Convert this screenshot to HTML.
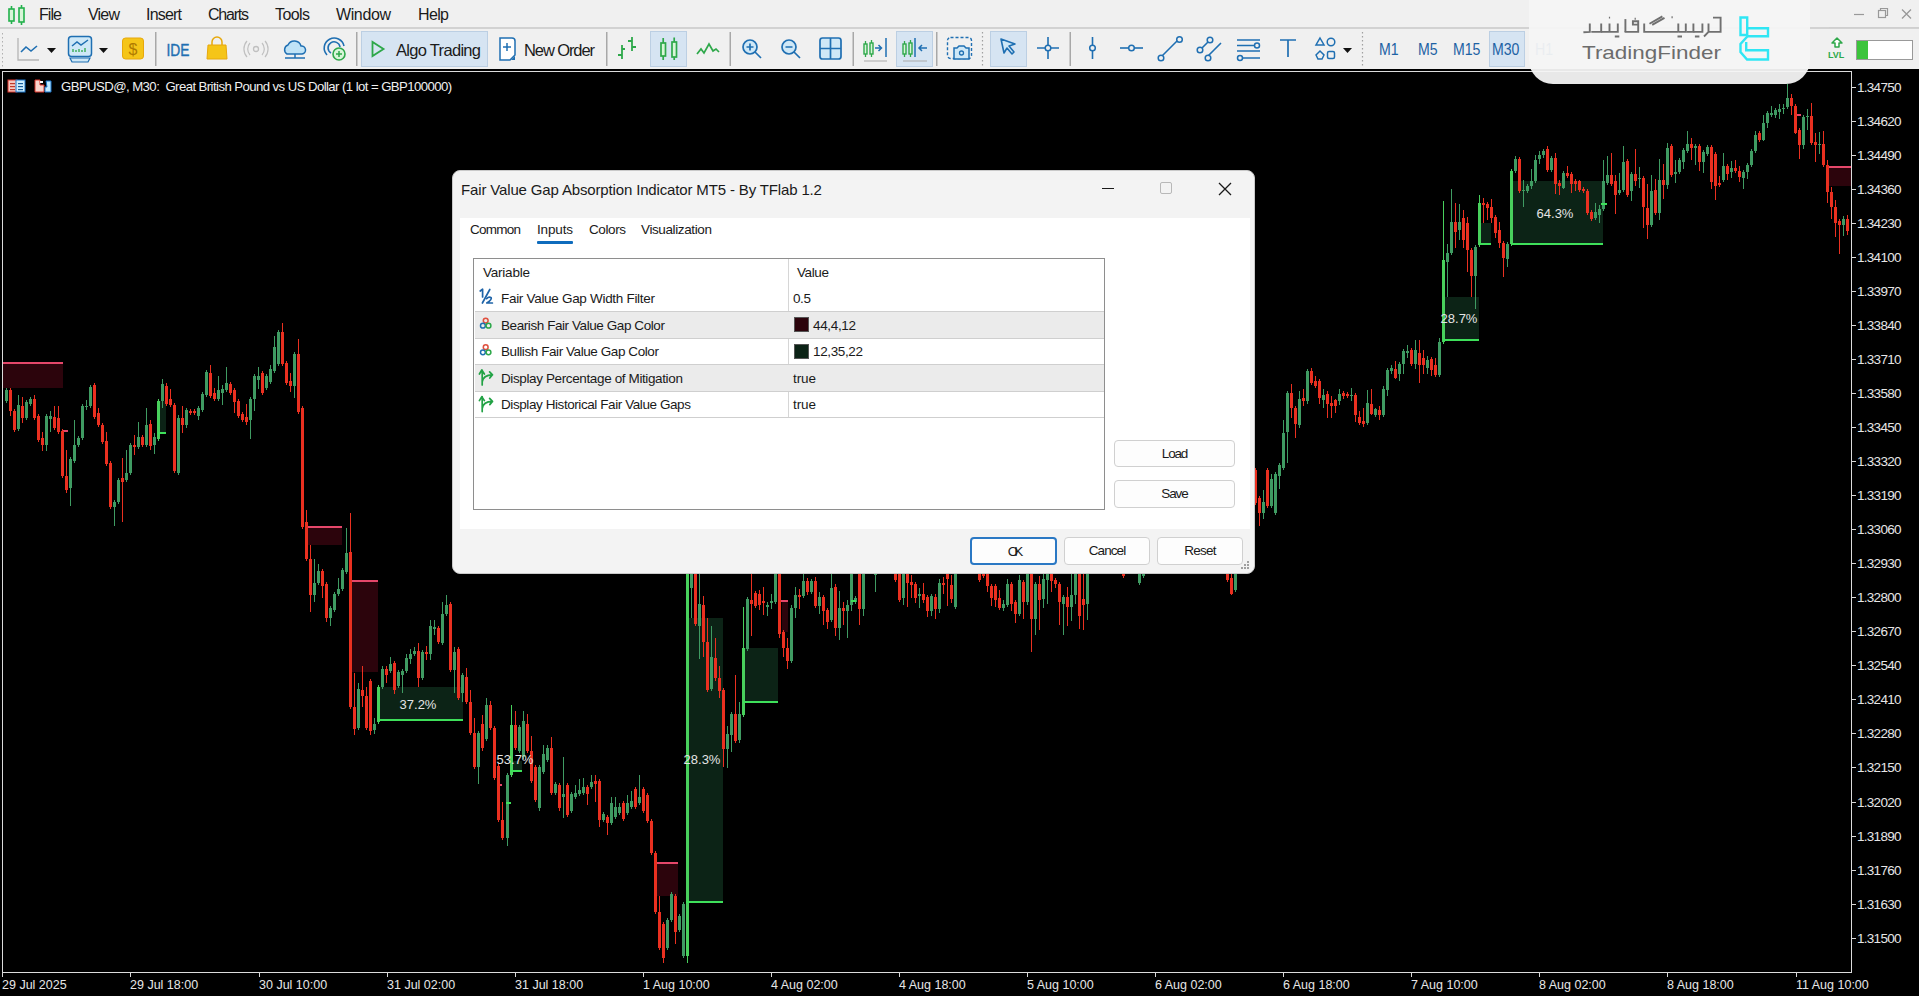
<!DOCTYPE html>
<html><head><meta charset="utf-8">
<style>
*{margin:0;padding:0;box-sizing:border-box}
html,body{width:1919px;height:996px;overflow:hidden;background:#000;font-family:"Liberation Sans",sans-serif}
.abs{position:absolute}
#menubar{position:absolute;left:0;top:0;width:1919px;height:29px;background:#f0f0f0;border-bottom:2px solid #d2d2d2}
.mi{position:absolute;top:6px;font-size:15.5px;color:#1b1b1b}
#toolbar{position:absolute;left:0;top:29px;width:1919px;height:40px;background:#f0f0f0}
.sep{position:absolute;top:33px;width:2px;height:32px;background:#9a9a9a}
.hl{position:absolute;top:31px;height:36px;background:#d5e3f1;border:1px solid #b8cbe0}
.tb{position:absolute;font-size:16px;color:#1b1b1b}
.tf{position:absolute;top:40px;font-size:16px;color:#1d62a4}
#chart{position:absolute;left:0;top:69px;width:1919px;height:927px;background:#000}
.pl{position:absolute;left:1857px;font-size:12.5px;color:#e6e6e6;letter-spacing:0.1px}
.ptk{position:absolute;left:1851px;width:5px;height:1px;background:#d8d8d8}
.tl{position:absolute;top:978px;font-size:12.5px;color:#e6e6e6}
.ttk{position:absolute;top:972px;width:1px;height:5px;background:#d8d8d8}
#dlg{position:absolute;left:452px;top:170px;width:803px;height:404px;background:#f3f3f3;border:1px solid #c9c9c9;border-radius:8px;overflow:hidden}
.dt{position:absolute;font-size:13.5px;color:#1a1a1a}
.btn{position:absolute;background:#fdfdfd;border:1px solid #d0d0d0;border-radius:4px;font-size:13.5px;color:#1a1a1a;text-align:center}
</style></head><body>
<div id="chart">
<svg class="abs" style="left:0;top:-69px" width="1919" height="996" viewBox="0 0 1919 996">
<rect x="158" y="401" width="8" height="32" fill="#0c2316"/><rect x="378" y="687" width="85" height="33" fill="#0c2316"/><rect x="510" y="761" width="12" height="10" fill="#0c2316"/><rect x="686" y="618" width="37" height="284" fill="#0c2316"/><rect x="743" y="648" width="35" height="54" fill="#0c2316"/><rect x="1443" y="297" width="36" height="43" fill="#0c2316"/><rect x="1479" y="223" width="12" height="21" fill="#0c2316"/><rect x="1511" y="181" width="92" height="63" fill="#0c2316"/>
<rect x="3" y="363" width="60" height="25" fill="#2c040c"/><rect x="3" y="362" width="60" height="2" fill="#e5476a"/><rect x="308" y="527" width="34" height="18" fill="#2c040c"/><rect x="308" y="526" width="34" height="2" fill="#e5476a"/><rect x="352" y="581" width="26" height="91" fill="#2c040c"/><rect x="352" y="580" width="26" height="2" fill="#e5476a"/><rect x="654" y="863" width="24" height="33" fill="#2c040c"/><rect x="654" y="862" width="24" height="2" fill="#e5476a"/><rect x="1829" y="167" width="22" height="19" fill="#2c040c"/><rect x="1829" y="166" width="22" height="2" fill="#e5476a"/><rect x="782" y="602" width="6" height="30" fill="#2c040c"/><rect x="62" y="430" width="6" height="2" fill="#e5476a"/><rect x="497" y="784" width="5" height="2" fill="#e5476a"/><rect x="780" y="600" width="8" height="2" fill="#e5476a"/><rect x="1796" y="114" width="5" height="2" fill="#e5476a"/>
<rect x="6" y="388" width="1" height="15" fill="#3f9b62"/><rect x="5" y="390" width="3" height="11" fill="#3f9b62"/><rect x="10" y="388" width="1" height="28" fill="#ea3020"/><rect x="9" y="390" width="3" height="21" fill="#ea3020"/><rect x="14" y="409" width="1" height="23" fill="#ea3020"/><rect x="13" y="411" width="3" height="19" fill="#ea3020"/><rect x="18" y="395" width="1" height="36" fill="#3f9b62"/><rect x="17" y="405" width="3" height="24" fill="#3f9b62"/><rect x="22" y="397" width="1" height="26" fill="#ea3020"/><rect x="21" y="406" width="3" height="12" fill="#ea3020"/><rect x="26" y="400" width="1" height="20" fill="#3f9b62"/><rect x="25" y="402" width="3" height="16" fill="#3f9b62"/><rect x="30" y="397" width="1" height="9" fill="#3f9b62"/><rect x="29" y="399" width="3" height="5" fill="#3f9b62"/><rect x="34" y="395" width="1" height="25" fill="#ea3020"/><rect x="33" y="399" width="3" height="19" fill="#ea3020"/><rect x="38" y="414" width="1" height="28" fill="#ea3020"/><rect x="37" y="416" width="3" height="24" fill="#ea3020"/><rect x="42" y="432" width="1" height="19" fill="#ea3020"/><rect x="41" y="438" width="3" height="7" fill="#ea3020"/><rect x="46" y="414" width="1" height="37" fill="#3f9b62"/><rect x="45" y="416" width="3" height="29" fill="#3f9b62"/><rect x="50" y="411" width="1" height="21" fill="#3f9b62"/><rect x="49" y="416" width="3" height="3" fill="#3f9b62"/><rect x="54" y="406" width="1" height="24" fill="#ea3020"/><rect x="53" y="417" width="3" height="11" fill="#ea3020"/><rect x="58" y="406" width="1" height="28" fill="#ea3020"/><rect x="57" y="418" width="3" height="14" fill="#ea3020"/><rect x="62" y="429" width="1" height="49" fill="#ea3020"/><rect x="61" y="431" width="3" height="45" fill="#ea3020"/><rect x="66" y="450" width="1" height="43" fill="#ea3020"/><rect x="65" y="476" width="3" height="14" fill="#ea3020"/><rect x="70" y="457" width="1" height="49" fill="#3f9b62"/><rect x="69" y="459" width="3" height="29" fill="#3f9b62"/><rect x="74" y="420" width="1" height="43" fill="#3f9b62"/><rect x="73" y="445" width="3" height="16" fill="#3f9b62"/><rect x="78" y="436" width="1" height="11" fill="#3f9b62"/><rect x="77" y="438" width="3" height="7" fill="#3f9b62"/><rect x="82" y="404" width="1" height="36" fill="#3f9b62"/><rect x="81" y="406" width="3" height="32" fill="#3f9b62"/><rect x="86" y="400" width="1" height="10" fill="#3f9b62"/><rect x="85" y="406" width="3" height="1" fill="#3f9b62"/><rect x="90" y="385" width="1" height="23" fill="#3f9b62"/><rect x="89" y="387" width="3" height="19" fill="#3f9b62"/><rect x="94" y="383" width="1" height="36" fill="#ea3020"/><rect x="93" y="385" width="3" height="32" fill="#ea3020"/><rect x="98" y="408" width="1" height="19" fill="#ea3020"/><rect x="97" y="413" width="3" height="12" fill="#ea3020"/><rect x="102" y="423" width="1" height="21" fill="#ea3020"/><rect x="101" y="425" width="3" height="17" fill="#ea3020"/><rect x="106" y="432" width="1" height="34" fill="#ea3020"/><rect x="105" y="441" width="3" height="23" fill="#ea3020"/><rect x="110" y="461" width="1" height="48" fill="#ea3020"/><rect x="109" y="463" width="3" height="44" fill="#ea3020"/><rect x="114" y="500" width="1" height="26" fill="#3f9b62"/><rect x="113" y="502" width="3" height="5" fill="#3f9b62"/><rect x="118" y="478" width="1" height="26" fill="#3f9b62"/><rect x="117" y="480" width="3" height="22" fill="#3f9b62"/><rect x="122" y="458" width="1" height="64" fill="#ea3020"/><rect x="121" y="478" width="3" height="4" fill="#ea3020"/><rect x="126" y="450" width="1" height="32" fill="#3f9b62"/><rect x="125" y="473" width="3" height="7" fill="#3f9b62"/><rect x="130" y="443" width="1" height="32" fill="#3f9b62"/><rect x="129" y="445" width="3" height="28" fill="#3f9b62"/><rect x="134" y="435" width="1" height="20" fill="#ea3020"/><rect x="133" y="445" width="3" height="2" fill="#ea3020"/><rect x="138" y="422" width="1" height="27" fill="#3f9b62"/><rect x="137" y="437" width="3" height="10" fill="#3f9b62"/><rect x="142" y="435" width="1" height="12" fill="#ea3020"/><rect x="141" y="437" width="3" height="8" fill="#ea3020"/><rect x="146" y="408" width="1" height="39" fill="#3f9b62"/><rect x="145" y="425" width="3" height="20" fill="#3f9b62"/><rect x="150" y="420" width="1" height="30" fill="#ea3020"/><rect x="149" y="424" width="3" height="22" fill="#ea3020"/><rect x="154" y="433" width="1" height="21" fill="#3f9b62"/><rect x="153" y="437" width="3" height="8" fill="#3f9b62"/><rect x="158" y="399" width="1" height="42" fill="#48d05c"/><rect x="157" y="401" width="3" height="38" fill="#48d05c"/><rect x="162" y="379" width="1" height="29" fill="#3f9b62"/><rect x="161" y="384" width="3" height="17" fill="#3f9b62"/><rect x="166" y="383" width="1" height="23" fill="#ea3020"/><rect x="165" y="386" width="3" height="18" fill="#ea3020"/><rect x="170" y="389" width="1" height="18" fill="#ea3020"/><rect x="169" y="399" width="3" height="6" fill="#ea3020"/><rect x="174" y="403" width="1" height="70" fill="#ea3020"/><rect x="173" y="405" width="3" height="66" fill="#ea3020"/><rect x="178" y="415" width="1" height="60" fill="#3f9b62"/><rect x="177" y="418" width="3" height="55" fill="#3f9b62"/><rect x="182" y="406" width="1" height="27" fill="#ea3020"/><rect x="181" y="418" width="3" height="7" fill="#ea3020"/><rect x="186" y="408" width="1" height="20" fill="#3f9b62"/><rect x="185" y="410" width="3" height="15" fill="#3f9b62"/><rect x="190" y="409" width="1" height="6" fill="#ea3020"/><rect x="189" y="411" width="3" height="2" fill="#ea3020"/><rect x="194" y="409" width="1" height="6" fill="#ea3020"/><rect x="193" y="411" width="3" height="2" fill="#ea3020"/><rect x="198" y="406" width="1" height="14" fill="#3f9b62"/><rect x="197" y="408" width="3" height="8" fill="#3f9b62"/><rect x="202" y="392" width="1" height="20" fill="#3f9b62"/><rect x="201" y="394" width="3" height="16" fill="#3f9b62"/><rect x="206" y="370" width="1" height="27" fill="#3f9b62"/><rect x="205" y="372" width="3" height="23" fill="#3f9b62"/><rect x="210" y="365" width="1" height="33" fill="#ea3020"/><rect x="209" y="373" width="3" height="23" fill="#ea3020"/><rect x="214" y="388" width="1" height="13" fill="#ea3020"/><rect x="213" y="393" width="3" height="6" fill="#ea3020"/><rect x="218" y="376" width="1" height="25" fill="#3f9b62"/><rect x="217" y="390" width="3" height="9" fill="#3f9b62"/><rect x="222" y="385" width="1" height="20" fill="#3f9b62"/><rect x="221" y="389" width="3" height="4" fill="#3f9b62"/><rect x="226" y="367" width="1" height="25" fill="#3f9b62"/><rect x="225" y="383" width="3" height="7" fill="#3f9b62"/><rect x="230" y="382" width="1" height="13" fill="#ea3020"/><rect x="229" y="384" width="3" height="9" fill="#ea3020"/><rect x="234" y="388" width="1" height="25" fill="#ea3020"/><rect x="233" y="390" width="3" height="12" fill="#ea3020"/><rect x="238" y="399" width="1" height="19" fill="#ea3020"/><rect x="237" y="401" width="3" height="15" fill="#ea3020"/><rect x="242" y="412" width="1" height="10" fill="#ea3020"/><rect x="241" y="414" width="3" height="6" fill="#ea3020"/><rect x="246" y="404" width="1" height="21" fill="#ea3020"/><rect x="245" y="417" width="3" height="5" fill="#ea3020"/><rect x="250" y="397" width="1" height="42" fill="#3f9b62"/><rect x="249" y="399" width="3" height="21" fill="#3f9b62"/><rect x="254" y="374" width="1" height="37" fill="#3f9b62"/><rect x="253" y="376" width="3" height="23" fill="#3f9b62"/><rect x="258" y="367" width="1" height="22" fill="#3f9b62"/><rect x="257" y="376" width="3" height="4" fill="#3f9b62"/><rect x="262" y="371" width="1" height="24" fill="#ea3020"/><rect x="261" y="373" width="3" height="20" fill="#ea3020"/><rect x="266" y="374" width="1" height="16" fill="#3f9b62"/><rect x="265" y="376" width="3" height="12" fill="#3f9b62"/><rect x="270" y="365" width="1" height="19" fill="#3f9b62"/><rect x="269" y="369" width="3" height="13" fill="#3f9b62"/><rect x="274" y="336" width="1" height="37" fill="#3f9b62"/><rect x="273" y="347" width="3" height="24" fill="#3f9b62"/><rect x="278" y="330" width="1" height="36" fill="#3f9b62"/><rect x="277" y="332" width="3" height="32" fill="#3f9b62"/><rect x="282" y="323" width="1" height="43" fill="#ea3020"/><rect x="281" y="332" width="3" height="32" fill="#ea3020"/><rect x="286" y="361" width="1" height="24" fill="#ea3020"/><rect x="285" y="363" width="3" height="20" fill="#ea3020"/><rect x="290" y="373" width="1" height="19" fill="#ea3020"/><rect x="289" y="381" width="3" height="5" fill="#ea3020"/><rect x="294" y="352" width="1" height="46" fill="#3f9b62"/><rect x="293" y="354" width="3" height="32" fill="#3f9b62"/><rect x="298" y="339" width="1" height="75" fill="#ea3020"/><rect x="297" y="354" width="3" height="58" fill="#ea3020"/><rect x="302" y="406" width="1" height="123" fill="#ea3020"/><rect x="301" y="408" width="3" height="119" fill="#ea3020"/><rect x="306" y="510" width="1" height="51" fill="#ea3020"/><rect x="305" y="522" width="3" height="37" fill="#ea3020"/><rect x="310" y="545" width="1" height="67" fill="#ea3020"/><rect x="309" y="559" width="3" height="36" fill="#ea3020"/><rect x="314" y="559" width="1" height="43" fill="#3f9b62"/><rect x="313" y="583" width="3" height="12" fill="#3f9b62"/><rect x="318" y="564" width="1" height="21" fill="#3f9b62"/><rect x="317" y="571" width="3" height="12" fill="#3f9b62"/><rect x="322" y="569" width="1" height="29" fill="#ea3020"/><rect x="321" y="571" width="3" height="15" fill="#ea3020"/><rect x="326" y="582" width="1" height="40" fill="#ea3020"/><rect x="325" y="584" width="3" height="34" fill="#ea3020"/><rect x="330" y="606" width="1" height="20" fill="#3f9b62"/><rect x="329" y="608" width="3" height="10" fill="#3f9b62"/><rect x="334" y="592" width="1" height="20" fill="#3f9b62"/><rect x="333" y="594" width="3" height="16" fill="#3f9b62"/><rect x="338" y="578" width="1" height="18" fill="#3f9b62"/><rect x="337" y="589" width="3" height="5" fill="#3f9b62"/><rect x="342" y="568" width="1" height="23" fill="#3f9b62"/><rect x="341" y="570" width="3" height="19" fill="#3f9b62"/><rect x="346" y="528" width="1" height="46" fill="#3f9b62"/><rect x="345" y="553" width="3" height="19" fill="#3f9b62"/><rect x="350" y="513" width="1" height="196" fill="#ea3020"/><rect x="349" y="552" width="3" height="155" fill="#ea3020"/><rect x="354" y="673" width="1" height="62" fill="#ea3020"/><rect x="353" y="707" width="3" height="22" fill="#ea3020"/><rect x="358" y="683" width="1" height="47" fill="#3f9b62"/><rect x="357" y="689" width="3" height="39" fill="#3f9b62"/><rect x="362" y="666" width="1" height="41" fill="#ea3020"/><rect x="361" y="690" width="3" height="6" fill="#ea3020"/><rect x="366" y="687" width="1" height="43" fill="#ea3020"/><rect x="365" y="696" width="3" height="32" fill="#ea3020"/><rect x="370" y="679" width="1" height="56" fill="#ea3020"/><rect x="369" y="681" width="3" height="50" fill="#ea3020"/><rect x="374" y="718" width="1" height="16" fill="#3f9b62"/><rect x="373" y="724" width="3" height="6" fill="#3f9b62"/><rect x="378" y="685" width="1" height="39" fill="#48d05c"/><rect x="377" y="687" width="3" height="35" fill="#48d05c"/><rect x="382" y="666" width="1" height="23" fill="#3f9b62"/><rect x="381" y="669" width="3" height="18" fill="#3f9b62"/><rect x="386" y="666" width="1" height="17" fill="#ea3020"/><rect x="385" y="669" width="3" height="6" fill="#ea3020"/><rect x="390" y="657" width="1" height="16" fill="#3f9b62"/><rect x="389" y="664" width="3" height="7" fill="#3f9b62"/><rect x="394" y="661" width="1" height="33" fill="#ea3020"/><rect x="393" y="663" width="3" height="27" fill="#ea3020"/><rect x="398" y="670" width="1" height="18" fill="#3f9b62"/><rect x="397" y="672" width="3" height="14" fill="#3f9b62"/><rect x="402" y="669" width="1" height="24" fill="#3f9b62"/><rect x="401" y="671" width="3" height="4" fill="#3f9b62"/><rect x="406" y="654" width="1" height="19" fill="#3f9b62"/><rect x="405" y="658" width="3" height="13" fill="#3f9b62"/><rect x="410" y="649" width="1" height="15" fill="#3f9b62"/><rect x="409" y="654" width="3" height="5" fill="#3f9b62"/><rect x="414" y="647" width="1" height="9" fill="#3f9b62"/><rect x="413" y="651" width="3" height="3" fill="#3f9b62"/><rect x="418" y="643" width="1" height="44" fill="#ea3020"/><rect x="417" y="651" width="3" height="27" fill="#ea3020"/><rect x="422" y="650" width="1" height="30" fill="#3f9b62"/><rect x="421" y="652" width="3" height="26" fill="#3f9b62"/><rect x="426" y="646" width="1" height="14" fill="#ea3020"/><rect x="425" y="652" width="3" height="2" fill="#ea3020"/><rect x="430" y="620" width="1" height="40" fill="#3f9b62"/><rect x="429" y="626" width="3" height="28" fill="#3f9b62"/><rect x="434" y="620" width="1" height="15" fill="#3f9b62"/><rect x="433" y="627" width="3" height="2" fill="#3f9b62"/><rect x="438" y="626" width="1" height="18" fill="#ea3020"/><rect x="437" y="628" width="3" height="14" fill="#ea3020"/><rect x="442" y="602" width="1" height="43" fill="#3f9b62"/><rect x="441" y="614" width="3" height="29" fill="#3f9b62"/><rect x="446" y="595" width="1" height="21" fill="#3f9b62"/><rect x="445" y="605" width="3" height="9" fill="#3f9b62"/><rect x="450" y="602" width="1" height="70" fill="#ea3020"/><rect x="449" y="604" width="3" height="66" fill="#ea3020"/><rect x="454" y="647" width="1" height="46" fill="#3f9b62"/><rect x="453" y="652" width="3" height="18" fill="#3f9b62"/><rect x="458" y="647" width="1" height="53" fill="#ea3020"/><rect x="457" y="649" width="3" height="49" fill="#ea3020"/><rect x="462" y="673" width="1" height="29" fill="#3f9b62"/><rect x="461" y="675" width="3" height="18" fill="#3f9b62"/><rect x="466" y="668" width="1" height="36" fill="#ea3020"/><rect x="465" y="677" width="3" height="25" fill="#ea3020"/><rect x="470" y="690" width="1" height="45" fill="#ea3020"/><rect x="469" y="702" width="3" height="31" fill="#ea3020"/><rect x="474" y="718" width="1" height="51" fill="#ea3020"/><rect x="473" y="733" width="3" height="34" fill="#ea3020"/><rect x="478" y="731" width="1" height="53" fill="#3f9b62"/><rect x="477" y="733" width="3" height="34" fill="#3f9b62"/><rect x="482" y="715" width="1" height="36" fill="#ea3020"/><rect x="481" y="724" width="3" height="24" fill="#ea3020"/><rect x="486" y="698" width="1" height="43" fill="#3f9b62"/><rect x="485" y="705" width="3" height="34" fill="#3f9b62"/><rect x="490" y="701" width="1" height="29" fill="#ea3020"/><rect x="489" y="705" width="3" height="23" fill="#ea3020"/><rect x="494" y="726" width="1" height="54" fill="#ea3020"/><rect x="493" y="728" width="3" height="50" fill="#ea3020"/><rect x="498" y="764" width="1" height="58" fill="#ea3020"/><rect x="497" y="766" width="3" height="54" fill="#ea3020"/><rect x="502" y="802" width="1" height="38" fill="#ea3020"/><rect x="501" y="820" width="3" height="18" fill="#ea3020"/><rect x="507" y="773" width="1" height="73" fill="#3f9b62"/><rect x="506" y="775" width="3" height="63" fill="#3f9b62"/><rect x="511" y="705" width="1" height="72" fill="#48d05c"/><rect x="510" y="725" width="3" height="50" fill="#48d05c"/><rect x="515" y="711" width="1" height="39" fill="#ea3020"/><rect x="514" y="725" width="3" height="23" fill="#ea3020"/><rect x="519" y="725" width="1" height="28" fill="#3f9b62"/><rect x="518" y="727" width="3" height="24" fill="#3f9b62"/><rect x="523" y="711" width="1" height="48" fill="#3f9b62"/><rect x="522" y="721" width="3" height="36" fill="#3f9b62"/><rect x="527" y="714" width="1" height="39" fill="#ea3020"/><rect x="526" y="724" width="3" height="27" fill="#ea3020"/><rect x="531" y="736" width="1" height="47" fill="#ea3020"/><rect x="530" y="751" width="3" height="30" fill="#ea3020"/><rect x="535" y="765" width="1" height="37" fill="#ea3020"/><rect x="534" y="767" width="3" height="33" fill="#ea3020"/><rect x="539" y="765" width="1" height="46" fill="#3f9b62"/><rect x="538" y="767" width="3" height="41" fill="#3f9b62"/><rect x="543" y="745" width="1" height="29" fill="#3f9b62"/><rect x="542" y="754" width="3" height="18" fill="#3f9b62"/><rect x="547" y="745" width="1" height="17" fill="#3f9b62"/><rect x="546" y="748" width="3" height="12" fill="#3f9b62"/><rect x="551" y="737" width="1" height="58" fill="#ea3020"/><rect x="550" y="748" width="3" height="45" fill="#ea3020"/><rect x="555" y="782" width="1" height="13" fill="#3f9b62"/><rect x="554" y="784" width="3" height="9" fill="#3f9b62"/><rect x="559" y="783" width="1" height="28" fill="#ea3020"/><rect x="558" y="785" width="3" height="23" fill="#ea3020"/><rect x="563" y="757" width="1" height="61" fill="#3f9b62"/><rect x="562" y="794" width="3" height="3" fill="#3f9b62"/><rect x="567" y="783" width="1" height="34" fill="#ea3020"/><rect x="566" y="785" width="3" height="30" fill="#ea3020"/><rect x="571" y="792" width="1" height="21" fill="#3f9b62"/><rect x="570" y="794" width="3" height="17" fill="#3f9b62"/><rect x="575" y="785" width="1" height="14" fill="#3f9b62"/><rect x="574" y="793" width="3" height="4" fill="#3f9b62"/><rect x="579" y="779" width="1" height="17" fill="#3f9b62"/><rect x="578" y="790" width="3" height="4" fill="#3f9b62"/><rect x="583" y="778" width="1" height="17" fill="#3f9b62"/><rect x="582" y="787" width="3" height="6" fill="#3f9b62"/><rect x="587" y="785" width="1" height="20" fill="#ea3020"/><rect x="586" y="787" width="3" height="7" fill="#ea3020"/><rect x="591" y="775" width="1" height="14" fill="#3f9b62"/><rect x="590" y="782" width="3" height="5" fill="#3f9b62"/><rect x="595" y="775" width="1" height="27" fill="#ea3020"/><rect x="594" y="781" width="3" height="3" fill="#ea3020"/><rect x="599" y="779" width="1" height="48" fill="#ea3020"/><rect x="598" y="781" width="3" height="39" fill="#ea3020"/><rect x="603" y="812" width="1" height="10" fill="#3f9b62"/><rect x="602" y="814" width="3" height="6" fill="#3f9b62"/><rect x="607" y="815" width="1" height="20" fill="#ea3020"/><rect x="606" y="817" width="3" height="6" fill="#ea3020"/><rect x="611" y="797" width="1" height="28" fill="#3f9b62"/><rect x="610" y="803" width="3" height="20" fill="#3f9b62"/><rect x="615" y="797" width="1" height="22" fill="#3f9b62"/><rect x="614" y="807" width="3" height="10" fill="#3f9b62"/><rect x="619" y="803" width="1" height="12" fill="#3f9b62"/><rect x="618" y="807" width="3" height="6" fill="#3f9b62"/><rect x="623" y="801" width="1" height="20" fill="#ea3020"/><rect x="622" y="803" width="3" height="16" fill="#ea3020"/><rect x="627" y="795" width="1" height="20" fill="#3f9b62"/><rect x="626" y="803" width="3" height="10" fill="#3f9b62"/><rect x="631" y="791" width="1" height="18" fill="#3f9b62"/><rect x="630" y="801" width="3" height="6" fill="#3f9b62"/><rect x="635" y="787" width="1" height="22" fill="#ea3020"/><rect x="634" y="789" width="3" height="18" fill="#ea3020"/><rect x="639" y="775" width="1" height="30" fill="#3f9b62"/><rect x="638" y="797" width="3" height="6" fill="#3f9b62"/><rect x="643" y="787" width="1" height="26" fill="#ea3020"/><rect x="642" y="789" width="3" height="22" fill="#ea3020"/><rect x="647" y="793" width="1" height="30" fill="#ea3020"/><rect x="646" y="795" width="3" height="26" fill="#ea3020"/><rect x="651" y="819" width="1" height="36" fill="#ea3020"/><rect x="650" y="821" width="3" height="32" fill="#ea3020"/><rect x="655" y="851" width="1" height="63" fill="#ea3020"/><rect x="654" y="853" width="3" height="59" fill="#ea3020"/><rect x="659" y="896" width="1" height="54" fill="#ea3020"/><rect x="658" y="912" width="3" height="36" fill="#ea3020"/><rect x="663" y="922" width="1" height="41" fill="#ea3020"/><rect x="662" y="924" width="3" height="34" fill="#ea3020"/><rect x="667" y="918" width="1" height="32" fill="#3f9b62"/><rect x="666" y="920" width="3" height="28" fill="#3f9b62"/><rect x="671" y="892" width="1" height="30" fill="#3f9b62"/><rect x="670" y="894" width="3" height="26" fill="#3f9b62"/><rect x="675" y="894" width="1" height="50" fill="#ea3020"/><rect x="674" y="896" width="3" height="36" fill="#ea3020"/><rect x="679" y="914" width="1" height="18" fill="#3f9b62"/><rect x="678" y="916" width="3" height="14" fill="#3f9b62"/><rect x="683" y="902" width="1" height="56" fill="#3f9b62"/><rect x="682" y="904" width="3" height="52" fill="#3f9b62"/><rect x="687" y="555" width="1" height="408" fill="#48d05c"/><rect x="686" y="560" width="3" height="396" fill="#48d05c"/><rect x="691" y="574" width="1" height="44" fill="#3f9b62"/><rect x="690" y="574" width="3" height="14" fill="#3f9b62"/><rect x="695" y="555" width="1" height="71" fill="#ea3020"/><rect x="694" y="560" width="3" height="64" fill="#ea3020"/><rect x="699" y="574" width="1" height="85" fill="#3f9b62"/><rect x="698" y="604" width="3" height="22" fill="#3f9b62"/><rect x="703" y="596" width="1" height="61" fill="#ea3020"/><rect x="702" y="605" width="3" height="37" fill="#ea3020"/><rect x="707" y="618" width="1" height="74" fill="#ea3020"/><rect x="706" y="642" width="3" height="48" fill="#ea3020"/><rect x="711" y="626" width="1" height="65" fill="#3f9b62"/><rect x="710" y="657" width="3" height="32" fill="#3f9b62"/><rect x="715" y="638" width="1" height="43" fill="#ea3020"/><rect x="714" y="658" width="3" height="20" fill="#ea3020"/><rect x="719" y="666" width="1" height="32" fill="#ea3020"/><rect x="718" y="678" width="3" height="13" fill="#ea3020"/><rect x="723" y="688" width="1" height="79" fill="#ea3020"/><rect x="722" y="690" width="3" height="59" fill="#ea3020"/><rect x="727" y="726" width="1" height="42" fill="#3f9b62"/><rect x="726" y="734" width="3" height="15" fill="#3f9b62"/><rect x="731" y="712" width="1" height="40" fill="#3f9b62"/><rect x="730" y="714" width="3" height="21" fill="#3f9b62"/><rect x="735" y="675" width="1" height="68" fill="#ea3020"/><rect x="734" y="714" width="3" height="27" fill="#ea3020"/><rect x="739" y="702" width="1" height="41" fill="#3f9b62"/><rect x="738" y="714" width="3" height="26" fill="#3f9b62"/><rect x="743" y="607" width="1" height="110" fill="#48d05c"/><rect x="742" y="648" width="3" height="67" fill="#48d05c"/><rect x="747" y="597" width="1" height="54" fill="#3f9b62"/><rect x="746" y="599" width="3" height="50" fill="#3f9b62"/><rect x="751" y="560" width="1" height="76" fill="#ea3020"/><rect x="750" y="600" width="3" height="4" fill="#ea3020"/><rect x="755" y="591" width="1" height="17" fill="#ea3020"/><rect x="754" y="593" width="3" height="13" fill="#ea3020"/><rect x="759" y="590" width="1" height="20" fill="#ea3020"/><rect x="758" y="594" width="3" height="11" fill="#ea3020"/><rect x="763" y="587" width="1" height="28" fill="#ea3020"/><rect x="762" y="601" width="3" height="2" fill="#ea3020"/><rect x="767" y="602" width="1" height="14" fill="#3f9b62"/><rect x="766" y="605" width="3" height="2" fill="#3f9b62"/><rect x="771" y="594" width="1" height="15" fill="#3f9b62"/><rect x="770" y="601" width="3" height="2" fill="#3f9b62"/><rect x="775" y="555" width="1" height="49" fill="#3f9b62"/><rect x="774" y="560" width="3" height="42" fill="#3f9b62"/><rect x="779" y="555" width="1" height="83" fill="#ea3020"/><rect x="778" y="560" width="3" height="74" fill="#ea3020"/><rect x="783" y="630" width="1" height="27" fill="#ea3020"/><rect x="782" y="632" width="3" height="16" fill="#ea3020"/><rect x="787" y="638" width="1" height="31" fill="#ea3020"/><rect x="786" y="648" width="3" height="13" fill="#ea3020"/><rect x="791" y="605" width="1" height="58" fill="#3f9b62"/><rect x="790" y="608" width="3" height="53" fill="#3f9b62"/><rect x="795" y="587" width="1" height="31" fill="#3f9b62"/><rect x="794" y="595" width="3" height="13" fill="#3f9b62"/><rect x="799" y="589" width="1" height="20" fill="#ea3020"/><rect x="798" y="595" width="3" height="2" fill="#ea3020"/><rect x="803" y="560" width="1" height="38" fill="#3f9b62"/><rect x="802" y="581" width="3" height="15" fill="#3f9b62"/><rect x="807" y="578" width="1" height="17" fill="#ea3020"/><rect x="806" y="581" width="3" height="11" fill="#ea3020"/><rect x="811" y="579" width="1" height="15" fill="#3f9b62"/><rect x="810" y="581" width="3" height="11" fill="#3f9b62"/><rect x="815" y="577" width="1" height="31" fill="#ea3020"/><rect x="814" y="581" width="3" height="25" fill="#ea3020"/><rect x="819" y="592" width="1" height="22" fill="#3f9b62"/><rect x="818" y="597" width="3" height="9" fill="#3f9b62"/><rect x="823" y="595" width="1" height="30" fill="#ea3020"/><rect x="822" y="597" width="3" height="14" fill="#ea3020"/><rect x="827" y="608" width="1" height="21" fill="#ea3020"/><rect x="826" y="610" width="3" height="12" fill="#ea3020"/><rect x="831" y="560" width="1" height="62" fill="#3f9b62"/><rect x="830" y="588" width="3" height="32" fill="#3f9b62"/><rect x="835" y="584" width="1" height="52" fill="#ea3020"/><rect x="834" y="587" width="3" height="41" fill="#ea3020"/><rect x="839" y="591" width="1" height="49" fill="#3f9b62"/><rect x="838" y="608" width="3" height="20" fill="#3f9b62"/><rect x="843" y="602" width="1" height="23" fill="#ea3020"/><rect x="842" y="608" width="3" height="3" fill="#ea3020"/><rect x="847" y="600" width="1" height="38" fill="#3f9b62"/><rect x="846" y="605" width="3" height="6" fill="#3f9b62"/><rect x="851" y="555" width="1" height="56" fill="#3f9b62"/><rect x="850" y="560" width="3" height="45" fill="#3f9b62"/><rect x="855" y="596" width="1" height="8" fill="#3f9b62"/><rect x="854" y="598" width="3" height="4" fill="#3f9b62"/><rect x="859" y="555" width="1" height="70" fill="#ea3020"/><rect x="858" y="560" width="3" height="49" fill="#ea3020"/><rect x="863" y="555" width="1" height="61" fill="#3f9b62"/><rect x="862" y="560" width="3" height="49" fill="#3f9b62"/><rect x="875" y="535" width="1" height="57" fill="#3f9b62"/><rect x="874" y="540" width="3" height="35" fill="#3f9b62"/><rect x="895" y="535" width="1" height="47" fill="#ea3020"/><rect x="894" y="540" width="3" height="40" fill="#ea3020"/><rect x="899" y="555" width="1" height="47" fill="#ea3020"/><rect x="898" y="560" width="3" height="40" fill="#ea3020"/><rect x="903" y="555" width="1" height="50" fill="#3f9b62"/><rect x="902" y="560" width="3" height="38" fill="#3f9b62"/><rect x="907" y="555" width="1" height="52" fill="#ea3020"/><rect x="906" y="560" width="3" height="23" fill="#ea3020"/><rect x="911" y="575" width="1" height="23" fill="#ea3020"/><rect x="910" y="582" width="3" height="3" fill="#ea3020"/><rect x="915" y="582" width="1" height="21" fill="#ea3020"/><rect x="914" y="584" width="3" height="14" fill="#ea3020"/><rect x="919" y="588" width="1" height="20" fill="#3f9b62"/><rect x="918" y="594" width="3" height="2" fill="#3f9b62"/><rect x="923" y="583" width="1" height="20" fill="#ea3020"/><rect x="922" y="594" width="3" height="6" fill="#ea3020"/><rect x="927" y="595" width="1" height="22" fill="#ea3020"/><rect x="926" y="597" width="3" height="14" fill="#ea3020"/><rect x="931" y="594" width="1" height="22" fill="#3f9b62"/><rect x="930" y="596" width="3" height="15" fill="#3f9b62"/><rect x="935" y="594" width="1" height="25" fill="#ea3020"/><rect x="934" y="597" width="3" height="12" fill="#ea3020"/><rect x="939" y="579" width="1" height="34" fill="#3f9b62"/><rect x="938" y="583" width="3" height="26" fill="#3f9b62"/><rect x="943" y="577" width="1" height="17" fill="#ea3020"/><rect x="942" y="583" width="3" height="2" fill="#ea3020"/><rect x="947" y="555" width="1" height="51" fill="#ea3020"/><rect x="946" y="560" width="3" height="19" fill="#ea3020"/><rect x="951" y="575" width="1" height="28" fill="#ea3020"/><rect x="950" y="585" width="3" height="14" fill="#ea3020"/><rect x="955" y="555" width="1" height="54" fill="#3f9b62"/><rect x="954" y="560" width="3" height="47" fill="#3f9b62"/><rect x="979" y="535" width="1" height="47" fill="#ea3020"/><rect x="978" y="540" width="3" height="40" fill="#ea3020"/><rect x="983" y="555" width="1" height="23" fill="#ea3020"/><rect x="982" y="560" width="3" height="16" fill="#ea3020"/><rect x="987" y="555" width="1" height="37" fill="#ea3020"/><rect x="986" y="560" width="3" height="26" fill="#ea3020"/><rect x="991" y="584" width="1" height="22" fill="#ea3020"/><rect x="990" y="586" width="3" height="12" fill="#ea3020"/><rect x="995" y="584" width="1" height="23" fill="#ea3020"/><rect x="994" y="586" width="3" height="14" fill="#ea3020"/><rect x="999" y="590" width="1" height="20" fill="#ea3020"/><rect x="998" y="598" width="3" height="10" fill="#ea3020"/><rect x="1003" y="600" width="1" height="11" fill="#3f9b62"/><rect x="1002" y="604" width="3" height="4" fill="#3f9b62"/><rect x="1007" y="579" width="1" height="28" fill="#3f9b62"/><rect x="1006" y="584" width="3" height="21" fill="#3f9b62"/><rect x="1011" y="582" width="1" height="29" fill="#ea3020"/><rect x="1010" y="584" width="3" height="20" fill="#ea3020"/><rect x="1015" y="600" width="1" height="23" fill="#ea3020"/><rect x="1014" y="602" width="3" height="12" fill="#ea3020"/><rect x="1019" y="575" width="1" height="41" fill="#3f9b62"/><rect x="1018" y="580" width="3" height="34" fill="#3f9b62"/><rect x="1023" y="580" width="1" height="39" fill="#ea3020"/><rect x="1022" y="582" width="3" height="20" fill="#ea3020"/><rect x="1027" y="555" width="1" height="50" fill="#3f9b62"/><rect x="1026" y="560" width="3" height="42" fill="#3f9b62"/><rect x="1031" y="555" width="1" height="97" fill="#ea3020"/><rect x="1030" y="560" width="3" height="59" fill="#ea3020"/><rect x="1035" y="582" width="1" height="53" fill="#3f9b62"/><rect x="1034" y="584" width="3" height="35" fill="#3f9b62"/><rect x="1039" y="576" width="1" height="54" fill="#ea3020"/><rect x="1038" y="584" width="3" height="16" fill="#ea3020"/><rect x="1043" y="560" width="1" height="48" fill="#3f9b62"/><rect x="1042" y="579" width="3" height="20" fill="#3f9b62"/><rect x="1047" y="555" width="1" height="49" fill="#3f9b62"/><rect x="1046" y="560" width="3" height="20" fill="#3f9b62"/><rect x="1051" y="555" width="1" height="37" fill="#ea3020"/><rect x="1050" y="560" width="3" height="21" fill="#ea3020"/><rect x="1055" y="578" width="1" height="10" fill="#ea3020"/><rect x="1054" y="580" width="3" height="4" fill="#ea3020"/><rect x="1059" y="582" width="1" height="43" fill="#ea3020"/><rect x="1058" y="584" width="3" height="18" fill="#ea3020"/><rect x="1063" y="595" width="1" height="40" fill="#3f9b62"/><rect x="1062" y="597" width="3" height="7" fill="#3f9b62"/><rect x="1067" y="587" width="1" height="39" fill="#ea3020"/><rect x="1066" y="597" width="3" height="10" fill="#ea3020"/><rect x="1071" y="560" width="1" height="61" fill="#3f9b62"/><rect x="1070" y="595" width="3" height="12" fill="#3f9b62"/><rect x="1075" y="555" width="1" height="49" fill="#3f9b62"/><rect x="1074" y="560" width="3" height="35" fill="#3f9b62"/><rect x="1079" y="555" width="1" height="74" fill="#ea3020"/><rect x="1078" y="560" width="3" height="56" fill="#ea3020"/><rect x="1083" y="560" width="1" height="70" fill="#ea3020"/><rect x="1082" y="599" width="3" height="6" fill="#ea3020"/><rect x="1087" y="555" width="1" height="65" fill="#3f9b62"/><rect x="1086" y="560" width="3" height="44" fill="#3f9b62"/><rect x="1123" y="555" width="1" height="23" fill="#ea3020"/><rect x="1122" y="560" width="3" height="16" fill="#ea3020"/><rect x="1139" y="555" width="1" height="30" fill="#3f9b62"/><rect x="1138" y="560" width="3" height="23" fill="#3f9b62"/><rect x="1143" y="555" width="1" height="23" fill="#3f9b62"/><rect x="1142" y="560" width="3" height="16" fill="#3f9b62"/><rect x="1227" y="555" width="1" height="27" fill="#ea3020"/><rect x="1226" y="560" width="3" height="20" fill="#ea3020"/><rect x="1231" y="560" width="1" height="35" fill="#ea3020"/><rect x="1230" y="578" width="3" height="16" fill="#ea3020"/><rect x="1235" y="555" width="1" height="37" fill="#3f9b62"/><rect x="1234" y="560" width="3" height="30" fill="#3f9b62"/><rect x="1255" y="468" width="1" height="37" fill="#ea3020"/><rect x="1254" y="470" width="3" height="33" fill="#ea3020"/><rect x="1259" y="496" width="1" height="30" fill="#ea3020"/><rect x="1258" y="498" width="3" height="15" fill="#ea3020"/><rect x="1263" y="490" width="1" height="29" fill="#3f9b62"/><rect x="1262" y="502" width="3" height="11" fill="#3f9b62"/><rect x="1267" y="468" width="1" height="40" fill="#ea3020"/><rect x="1266" y="470" width="3" height="36" fill="#ea3020"/><rect x="1271" y="474" width="1" height="34" fill="#3f9b62"/><rect x="1270" y="479" width="3" height="27" fill="#3f9b62"/><rect x="1275" y="472" width="1" height="43" fill="#3f9b62"/><rect x="1274" y="474" width="3" height="39" fill="#3f9b62"/><rect x="1279" y="463" width="1" height="26" fill="#3f9b62"/><rect x="1278" y="465" width="3" height="11" fill="#3f9b62"/><rect x="1283" y="420" width="1" height="50" fill="#3f9b62"/><rect x="1282" y="433" width="3" height="35" fill="#3f9b62"/><rect x="1287" y="391" width="1" height="72" fill="#3f9b62"/><rect x="1286" y="393" width="3" height="39" fill="#3f9b62"/><rect x="1291" y="384" width="1" height="34" fill="#ea3020"/><rect x="1290" y="393" width="3" height="15" fill="#ea3020"/><rect x="1295" y="406" width="1" height="32" fill="#ea3020"/><rect x="1294" y="408" width="3" height="16" fill="#ea3020"/><rect x="1299" y="391" width="1" height="37" fill="#3f9b62"/><rect x="1298" y="399" width="3" height="26" fill="#3f9b62"/><rect x="1303" y="389" width="1" height="17" fill="#ea3020"/><rect x="1302" y="398" width="3" height="3" fill="#ea3020"/><rect x="1307" y="369" width="1" height="35" fill="#3f9b62"/><rect x="1306" y="371" width="3" height="30" fill="#3f9b62"/><rect x="1311" y="368" width="1" height="17" fill="#ea3020"/><rect x="1310" y="371" width="3" height="12" fill="#ea3020"/><rect x="1315" y="376" width="1" height="12" fill="#ea3020"/><rect x="1314" y="381" width="3" height="5" fill="#ea3020"/><rect x="1319" y="379" width="1" height="25" fill="#ea3020"/><rect x="1318" y="381" width="3" height="17" fill="#ea3020"/><rect x="1323" y="389" width="1" height="19" fill="#3f9b62"/><rect x="1322" y="395" width="3" height="5" fill="#3f9b62"/><rect x="1327" y="391" width="1" height="27" fill="#ea3020"/><rect x="1326" y="394" width="3" height="10" fill="#ea3020"/><rect x="1331" y="396" width="1" height="22" fill="#ea3020"/><rect x="1330" y="403" width="3" height="3" fill="#ea3020"/><rect x="1335" y="399" width="1" height="14" fill="#ea3020"/><rect x="1334" y="400" width="3" height="6" fill="#ea3020"/><rect x="1339" y="389" width="1" height="16" fill="#3f9b62"/><rect x="1338" y="394" width="3" height="7" fill="#3f9b62"/><rect x="1343" y="391" width="1" height="8" fill="#ea3020"/><rect x="1342" y="393" width="3" height="3" fill="#ea3020"/><rect x="1347" y="392" width="1" height="6" fill="#ea3020"/><rect x="1346" y="394" width="3" height="2" fill="#ea3020"/><rect x="1351" y="388" width="1" height="13" fill="#3f9b62"/><rect x="1350" y="395" width="3" height="1" fill="#3f9b62"/><rect x="1355" y="393" width="1" height="29" fill="#ea3020"/><rect x="1354" y="395" width="3" height="20" fill="#ea3020"/><rect x="1359" y="411" width="1" height="14" fill="#ea3020"/><rect x="1358" y="417" width="3" height="6" fill="#ea3020"/><rect x="1363" y="408" width="1" height="19" fill="#ea3020"/><rect x="1362" y="421" width="3" height="3" fill="#ea3020"/><rect x="1367" y="390" width="1" height="35" fill="#3f9b62"/><rect x="1366" y="403" width="3" height="20" fill="#3f9b62"/><rect x="1371" y="389" width="1" height="26" fill="#ea3020"/><rect x="1370" y="404" width="3" height="10" fill="#ea3020"/><rect x="1375" y="408" width="1" height="9" fill="#3f9b62"/><rect x="1374" y="409" width="3" height="6" fill="#3f9b62"/><rect x="1379" y="406" width="1" height="14" fill="#ea3020"/><rect x="1378" y="410" width="3" height="5" fill="#ea3020"/><rect x="1383" y="386" width="1" height="31" fill="#3f9b62"/><rect x="1382" y="389" width="3" height="26" fill="#3f9b62"/><rect x="1387" y="368" width="1" height="28" fill="#3f9b62"/><rect x="1386" y="370" width="3" height="20" fill="#3f9b62"/><rect x="1391" y="365" width="1" height="9" fill="#3f9b62"/><rect x="1390" y="368" width="3" height="3" fill="#3f9b62"/><rect x="1395" y="361" width="1" height="18" fill="#ea3020"/><rect x="1394" y="369" width="3" height="9" fill="#ea3020"/><rect x="1399" y="362" width="1" height="19" fill="#3f9b62"/><rect x="1398" y="364" width="3" height="10" fill="#3f9b62"/><rect x="1403" y="349" width="1" height="25" fill="#3f9b62"/><rect x="1402" y="351" width="3" height="13" fill="#3f9b62"/><rect x="1407" y="345" width="1" height="13" fill="#3f9b62"/><rect x="1406" y="351" width="3" height="2" fill="#3f9b62"/><rect x="1411" y="348" width="1" height="18" fill="#ea3020"/><rect x="1410" y="350" width="3" height="14" fill="#ea3020"/><rect x="1415" y="340" width="1" height="29" fill="#3f9b62"/><rect x="1414" y="350" width="3" height="14" fill="#3f9b62"/><rect x="1419" y="340" width="1" height="43" fill="#ea3020"/><rect x="1418" y="353" width="3" height="12" fill="#ea3020"/><rect x="1423" y="350" width="1" height="24" fill="#ea3020"/><rect x="1422" y="358" width="3" height="7" fill="#ea3020"/><rect x="1427" y="356" width="1" height="18" fill="#3f9b62"/><rect x="1426" y="360" width="3" height="8" fill="#3f9b62"/><rect x="1431" y="357" width="1" height="19" fill="#ea3020"/><rect x="1430" y="359" width="3" height="11" fill="#ea3020"/><rect x="1435" y="358" width="1" height="19" fill="#ea3020"/><rect x="1434" y="365" width="3" height="10" fill="#ea3020"/><rect x="1439" y="338" width="1" height="39" fill="#3f9b62"/><rect x="1438" y="342" width="3" height="33" fill="#3f9b62"/><rect x="1443" y="201" width="1" height="143" fill="#48d05c"/><rect x="1442" y="260" width="3" height="82" fill="#48d05c"/><rect x="1447" y="244" width="1" height="53" fill="#3f9b62"/><rect x="1446" y="253" width="3" height="9" fill="#3f9b62"/><rect x="1451" y="189" width="1" height="66" fill="#3f9b62"/><rect x="1450" y="222" width="3" height="31" fill="#3f9b62"/><rect x="1455" y="203" width="1" height="45" fill="#ea3020"/><rect x="1454" y="222" width="3" height="10" fill="#ea3020"/><rect x="1459" y="204" width="1" height="36" fill="#3f9b62"/><rect x="1458" y="222" width="3" height="8" fill="#3f9b62"/><rect x="1463" y="210" width="1" height="38" fill="#ea3020"/><rect x="1462" y="218" width="3" height="22" fill="#ea3020"/><rect x="1467" y="217" width="1" height="55" fill="#ea3020"/><rect x="1466" y="223" width="3" height="27" fill="#ea3020"/><rect x="1471" y="248" width="1" height="49" fill="#ea3020"/><rect x="1470" y="250" width="3" height="26" fill="#ea3020"/><rect x="1475" y="245" width="1" height="64" fill="#3f9b62"/><rect x="1474" y="247" width="3" height="29" fill="#3f9b62"/><rect x="1479" y="195" width="1" height="52" fill="#48d05c"/><rect x="1478" y="203" width="3" height="42" fill="#48d05c"/><rect x="1483" y="198" width="1" height="25" fill="#ea3020"/><rect x="1482" y="203" width="3" height="2" fill="#ea3020"/><rect x="1487" y="202" width="1" height="18" fill="#ea3020"/><rect x="1486" y="204" width="3" height="4" fill="#ea3020"/><rect x="1491" y="199" width="1" height="24" fill="#ea3020"/><rect x="1490" y="207" width="3" height="11" fill="#ea3020"/><rect x="1495" y="215" width="1" height="23" fill="#ea3020"/><rect x="1494" y="217" width="3" height="16" fill="#ea3020"/><rect x="1499" y="222" width="1" height="26" fill="#ea3020"/><rect x="1498" y="230" width="3" height="13" fill="#ea3020"/><rect x="1503" y="241" width="1" height="36" fill="#ea3020"/><rect x="1502" y="243" width="3" height="15" fill="#ea3020"/><rect x="1507" y="242" width="1" height="25" fill="#3f9b62"/><rect x="1506" y="244" width="3" height="15" fill="#3f9b62"/><rect x="1511" y="169" width="1" height="77" fill="#48d05c"/><rect x="1510" y="171" width="3" height="73" fill="#48d05c"/><rect x="1515" y="156" width="1" height="17" fill="#3f9b62"/><rect x="1514" y="159" width="3" height="12" fill="#3f9b62"/><rect x="1519" y="157" width="1" height="36" fill="#ea3020"/><rect x="1518" y="159" width="3" height="32" fill="#ea3020"/><rect x="1523" y="180" width="1" height="27" fill="#3f9b62"/><rect x="1522" y="190" width="3" height="1" fill="#3f9b62"/><rect x="1527" y="184" width="1" height="9" fill="#3f9b62"/><rect x="1526" y="186" width="3" height="5" fill="#3f9b62"/><rect x="1531" y="169" width="1" height="20" fill="#3f9b62"/><rect x="1530" y="181" width="3" height="5" fill="#3f9b62"/><rect x="1535" y="155" width="1" height="28" fill="#3f9b62"/><rect x="1534" y="160" width="3" height="21" fill="#3f9b62"/><rect x="1539" y="151" width="1" height="13" fill="#3f9b62"/><rect x="1538" y="155" width="3" height="4" fill="#3f9b62"/><rect x="1543" y="149" width="1" height="9" fill="#3f9b62"/><rect x="1542" y="151" width="3" height="4" fill="#3f9b62"/><rect x="1547" y="146" width="1" height="26" fill="#ea3020"/><rect x="1546" y="149" width="3" height="21" fill="#ea3020"/><rect x="1551" y="156" width="1" height="16" fill="#3f9b62"/><rect x="1550" y="158" width="3" height="12" fill="#3f9b62"/><rect x="1555" y="153" width="1" height="41" fill="#ea3020"/><rect x="1554" y="158" width="3" height="26" fill="#ea3020"/><rect x="1559" y="180" width="1" height="15" fill="#ea3020"/><rect x="1558" y="183" width="3" height="3" fill="#ea3020"/><rect x="1563" y="171" width="1" height="18" fill="#3f9b62"/><rect x="1562" y="173" width="3" height="15" fill="#3f9b62"/><rect x="1567" y="166" width="1" height="12" fill="#ea3020"/><rect x="1566" y="173" width="3" height="3" fill="#ea3020"/><rect x="1571" y="172" width="1" height="21" fill="#ea3020"/><rect x="1570" y="174" width="3" height="10" fill="#ea3020"/><rect x="1575" y="179" width="1" height="12" fill="#ea3020"/><rect x="1574" y="181" width="3" height="3" fill="#ea3020"/><rect x="1579" y="180" width="1" height="12" fill="#ea3020"/><rect x="1578" y="181" width="3" height="9" fill="#ea3020"/><rect x="1583" y="187" width="1" height="6" fill="#ea3020"/><rect x="1582" y="189" width="3" height="2" fill="#ea3020"/><rect x="1587" y="189" width="1" height="26" fill="#ea3020"/><rect x="1586" y="191" width="3" height="22" fill="#ea3020"/><rect x="1591" y="210" width="1" height="11" fill="#ea3020"/><rect x="1590" y="212" width="3" height="7" fill="#ea3020"/><rect x="1595" y="203" width="1" height="17" fill="#3f9b62"/><rect x="1594" y="212" width="3" height="6" fill="#3f9b62"/><rect x="1599" y="205" width="1" height="18" fill="#3f9b62"/><rect x="1598" y="209" width="3" height="6" fill="#3f9b62"/><rect x="1603" y="160" width="1" height="51" fill="#3f9b62"/><rect x="1602" y="181" width="3" height="28" fill="#3f9b62"/><rect x="1607" y="156" width="1" height="29" fill="#3f9b62"/><rect x="1606" y="175" width="3" height="8" fill="#3f9b62"/><rect x="1611" y="153" width="1" height="33" fill="#ea3020"/><rect x="1610" y="175" width="3" height="9" fill="#ea3020"/><rect x="1615" y="175" width="1" height="39" fill="#ea3020"/><rect x="1614" y="181" width="3" height="14" fill="#ea3020"/><rect x="1619" y="173" width="1" height="22" fill="#3f9b62"/><rect x="1618" y="190" width="3" height="3" fill="#3f9b62"/><rect x="1623" y="146" width="1" height="46" fill="#3f9b62"/><rect x="1622" y="162" width="3" height="28" fill="#3f9b62"/><rect x="1627" y="159" width="1" height="38" fill="#ea3020"/><rect x="1626" y="161" width="3" height="34" fill="#ea3020"/><rect x="1631" y="172" width="1" height="29" fill="#3f9b62"/><rect x="1630" y="174" width="3" height="17" fill="#3f9b62"/><rect x="1635" y="149" width="1" height="37" fill="#ea3020"/><rect x="1634" y="174" width="3" height="7" fill="#ea3020"/><rect x="1639" y="167" width="1" height="21" fill="#3f9b62"/><rect x="1638" y="178" width="3" height="1" fill="#3f9b62"/><rect x="1643" y="176" width="1" height="52" fill="#ea3020"/><rect x="1642" y="178" width="3" height="29" fill="#ea3020"/><rect x="1647" y="184" width="1" height="55" fill="#ea3020"/><rect x="1646" y="208" width="3" height="17" fill="#ea3020"/><rect x="1651" y="175" width="1" height="52" fill="#3f9b62"/><rect x="1650" y="191" width="3" height="34" fill="#3f9b62"/><rect x="1655" y="179" width="1" height="36" fill="#ea3020"/><rect x="1654" y="190" width="3" height="23" fill="#ea3020"/><rect x="1659" y="159" width="1" height="61" fill="#3f9b62"/><rect x="1658" y="180" width="3" height="33" fill="#3f9b62"/><rect x="1663" y="164" width="1" height="35" fill="#ea3020"/><rect x="1662" y="180" width="3" height="5" fill="#ea3020"/><rect x="1667" y="143" width="1" height="46" fill="#3f9b62"/><rect x="1666" y="148" width="3" height="37" fill="#3f9b62"/><rect x="1671" y="144" width="1" height="33" fill="#ea3020"/><rect x="1670" y="146" width="3" height="29" fill="#ea3020"/><rect x="1675" y="160" width="1" height="23" fill="#3f9b62"/><rect x="1674" y="172" width="3" height="2" fill="#3f9b62"/><rect x="1679" y="158" width="1" height="16" fill="#3f9b62"/><rect x="1678" y="160" width="3" height="12" fill="#3f9b62"/><rect x="1683" y="148" width="1" height="21" fill="#3f9b62"/><rect x="1682" y="150" width="3" height="12" fill="#3f9b62"/><rect x="1687" y="131" width="1" height="22" fill="#3f9b62"/><rect x="1686" y="144" width="3" height="7" fill="#3f9b62"/><rect x="1691" y="138" width="1" height="22" fill="#ea3020"/><rect x="1690" y="144" width="3" height="4" fill="#ea3020"/><rect x="1695" y="144" width="1" height="21" fill="#3f9b62"/><rect x="1694" y="146" width="3" height="2" fill="#3f9b62"/><rect x="1699" y="144" width="1" height="27" fill="#ea3020"/><rect x="1698" y="146" width="3" height="16" fill="#ea3020"/><rect x="1703" y="150" width="1" height="23" fill="#3f9b62"/><rect x="1702" y="152" width="3" height="10" fill="#3f9b62"/><rect x="1707" y="145" width="1" height="11" fill="#3f9b62"/><rect x="1706" y="147" width="3" height="7" fill="#3f9b62"/><rect x="1711" y="145" width="1" height="44" fill="#ea3020"/><rect x="1710" y="147" width="3" height="35" fill="#ea3020"/><rect x="1715" y="152" width="1" height="48" fill="#ea3020"/><rect x="1714" y="154" width="3" height="32" fill="#ea3020"/><rect x="1719" y="176" width="1" height="11" fill="#ea3020"/><rect x="1718" y="183" width="3" height="2" fill="#ea3020"/><rect x="1723" y="153" width="1" height="29" fill="#3f9b62"/><rect x="1722" y="166" width="3" height="14" fill="#3f9b62"/><rect x="1727" y="164" width="1" height="16" fill="#ea3020"/><rect x="1726" y="166" width="3" height="8" fill="#ea3020"/><rect x="1731" y="161" width="1" height="17" fill="#3f9b62"/><rect x="1730" y="168" width="3" height="4" fill="#3f9b62"/><rect x="1735" y="160" width="1" height="13" fill="#ea3020"/><rect x="1734" y="168" width="3" height="3" fill="#ea3020"/><rect x="1739" y="166" width="1" height="16" fill="#ea3020"/><rect x="1738" y="171" width="3" height="6" fill="#ea3020"/><rect x="1743" y="170" width="1" height="19" fill="#3f9b62"/><rect x="1742" y="172" width="3" height="6" fill="#3f9b62"/><rect x="1747" y="163" width="1" height="16" fill="#3f9b62"/><rect x="1746" y="165" width="3" height="7" fill="#3f9b62"/><rect x="1751" y="149" width="1" height="18" fill="#3f9b62"/><rect x="1750" y="151" width="3" height="14" fill="#3f9b62"/><rect x="1755" y="131" width="1" height="22" fill="#3f9b62"/><rect x="1754" y="135" width="3" height="16" fill="#3f9b62"/><rect x="1759" y="131" width="1" height="11" fill="#ea3020"/><rect x="1758" y="133" width="3" height="7" fill="#ea3020"/><rect x="1763" y="115" width="1" height="26" fill="#3f9b62"/><rect x="1762" y="123" width="3" height="17" fill="#3f9b62"/><rect x="1767" y="111" width="1" height="17" fill="#3f9b62"/><rect x="1766" y="113" width="3" height="10" fill="#3f9b62"/><rect x="1771" y="106" width="1" height="11" fill="#3f9b62"/><rect x="1770" y="113" width="3" height="2" fill="#3f9b62"/><rect x="1775" y="108" width="1" height="10" fill="#3f9b62"/><rect x="1774" y="110" width="3" height="5" fill="#3f9b62"/><rect x="1779" y="104" width="1" height="15" fill="#3f9b62"/><rect x="1778" y="109" width="3" height="3" fill="#3f9b62"/><rect x="1783" y="104" width="1" height="10" fill="#3f9b62"/><rect x="1782" y="108" width="3" height="1" fill="#3f9b62"/><rect x="1787" y="84" width="1" height="25" fill="#3f9b62"/><rect x="1786" y="98" width="3" height="9" fill="#3f9b62"/><rect x="1791" y="94" width="1" height="21" fill="#ea3020"/><rect x="1790" y="98" width="3" height="8" fill="#ea3020"/><rect x="1795" y="104" width="1" height="30" fill="#ea3020"/><rect x="1794" y="106" width="3" height="27" fill="#ea3020"/><rect x="1799" y="128" width="1" height="31" fill="#ea3020"/><rect x="1798" y="130" width="3" height="15" fill="#ea3020"/><rect x="1803" y="115" width="1" height="34" fill="#3f9b62"/><rect x="1802" y="117" width="3" height="28" fill="#3f9b62"/><rect x="1807" y="109" width="1" height="21" fill="#3f9b62"/><rect x="1806" y="116" width="3" height="1" fill="#3f9b62"/><rect x="1811" y="103" width="1" height="42" fill="#ea3020"/><rect x="1810" y="116" width="3" height="27" fill="#ea3020"/><rect x="1815" y="133" width="1" height="29" fill="#ea3020"/><rect x="1814" y="142" width="3" height="3" fill="#ea3020"/><rect x="1819" y="132" width="1" height="22" fill="#3f9b62"/><rect x="1818" y="144" width="3" height="1" fill="#3f9b62"/><rect x="1823" y="131" width="1" height="36" fill="#ea3020"/><rect x="1822" y="144" width="3" height="21" fill="#ea3020"/><rect x="1827" y="160" width="1" height="43" fill="#ea3020"/><rect x="1826" y="165" width="3" height="27" fill="#ea3020"/><rect x="1831" y="187" width="1" height="32" fill="#ea3020"/><rect x="1830" y="192" width="3" height="15" fill="#ea3020"/><rect x="1835" y="200" width="1" height="37" fill="#ea3020"/><rect x="1834" y="207" width="3" height="16" fill="#ea3020"/><rect x="1839" y="219" width="1" height="35" fill="#ea3020"/><rect x="1838" y="221" width="3" height="4" fill="#ea3020"/><rect x="1843" y="216" width="1" height="20" fill="#3f9b62"/><rect x="1842" y="219" width="3" height="6" fill="#3f9b62"/><rect x="1847" y="215" width="1" height="20" fill="#ea3020"/><rect x="1846" y="219" width="3" height="12" fill="#ea3020"/>
<rect x="158" y="432" width="8" height="2" fill="#3ee05a"/><rect x="378" y="719" width="85" height="2" fill="#3ee05a"/><rect x="510" y="770" width="12" height="2" fill="#3ee05a"/><rect x="686" y="901" width="37" height="2" fill="#3ee05a"/><rect x="743" y="701" width="35" height="2" fill="#3ee05a"/><rect x="1443" y="339" width="36" height="2" fill="#3ee05a"/><rect x="1479" y="243" width="12" height="2" fill="#3ee05a"/><rect x="1511" y="243" width="92" height="2" fill="#3ee05a"/><rect x="506" y="802" width="5" height="2" fill="#3ee05a"/><rect x="851" y="600" width="5" height="2" fill="#3ee05a"/><rect x="1601" y="203" width="6" height="2" fill="#3ee05a"/><text x="418" y="709" text-anchor="middle" font-size="13" fill="#e4e4e4" font-family="Liberation Sans, sans-serif">37.2%</text><text x="515" y="764" text-anchor="middle" font-size="13" fill="#e4e4e4" font-family="Liberation Sans, sans-serif">53.7%</text><text x="702" y="764" text-anchor="middle" font-size="13" fill="#e4e4e4" font-family="Liberation Sans, sans-serif">28.3%</text><text x="1459" y="323" text-anchor="middle" font-size="13" fill="#e4e4e4" font-family="Liberation Sans, sans-serif">28.7%</text><text x="1555" y="218" text-anchor="middle" font-size="13" fill="#e4e4e4" font-family="Liberation Sans, sans-serif">64.3%</text>
<rect x="2" y="71" width="1850" height="1" fill="#dcdcdc"/>
<rect x="2" y="71" width="1" height="902" fill="#dcdcdc"/>
<rect x="1851" y="71" width="1" height="902" fill="#dcdcdc"/>
<rect x="2" y="972" width="1850" height="1" fill="#dcdcdc"/>
</svg>
</div>
<div class="abs" style="left:0;top:0;width:1919px;height:996px">
<div class="pl" style="letter-spacing:-0.724px;top:80px;font-size:13.5px">1.34750</div><div class="ptk" style="top:87px"></div><div class="pl" style="letter-spacing:-0.724px;top:114px;font-size:13.5px">1.34620</div><div class="ptk" style="top:121px"></div><div class="pl" style="letter-spacing:-0.724px;top:148px;font-size:13.5px">1.34490</div><div class="ptk" style="top:155px"></div><div class="pl" style="letter-spacing:-0.724px;top:182px;font-size:13.5px">1.34360</div><div class="ptk" style="top:189px"></div><div class="pl" style="letter-spacing:-0.724px;top:216px;font-size:13.5px">1.34230</div><div class="ptk" style="top:223px"></div><div class="pl" style="letter-spacing:-0.724px;top:250px;font-size:13.5px">1.34100</div><div class="ptk" style="top:257px"></div><div class="pl" style="letter-spacing:-0.724px;top:284px;font-size:13.5px">1.33970</div><div class="ptk" style="top:291px"></div><div class="pl" style="letter-spacing:-0.724px;top:318px;font-size:13.5px">1.33840</div><div class="ptk" style="top:325px"></div><div class="pl" style="letter-spacing:-0.724px;top:352px;font-size:13.5px">1.33710</div><div class="ptk" style="top:359px"></div><div class="pl" style="letter-spacing:-0.724px;top:386px;font-size:13.5px">1.33580</div><div class="ptk" style="top:393px"></div><div class="pl" style="letter-spacing:-0.724px;top:420px;font-size:13.5px">1.33450</div><div class="ptk" style="top:427px"></div><div class="pl" style="letter-spacing:-0.724px;top:454px;font-size:13.5px">1.33320</div><div class="ptk" style="top:461px"></div><div class="pl" style="letter-spacing:-0.724px;top:488px;font-size:13.5px">1.33190</div><div class="ptk" style="top:495px"></div><div class="pl" style="letter-spacing:-0.724px;top:522px;font-size:13.5px">1.33060</div><div class="ptk" style="top:529px"></div><div class="pl" style="letter-spacing:-0.724px;top:556px;font-size:13.5px">1.32930</div><div class="ptk" style="top:563px"></div><div class="pl" style="letter-spacing:-0.724px;top:590px;font-size:13.5px">1.32800</div><div class="ptk" style="top:597px"></div><div class="pl" style="letter-spacing:-0.724px;top:624px;font-size:13.5px">1.32670</div><div class="ptk" style="top:631px"></div><div class="pl" style="letter-spacing:-0.724px;top:658px;font-size:13.5px">1.32540</div><div class="ptk" style="top:665px"></div><div class="pl" style="letter-spacing:-0.724px;top:692px;font-size:13.5px">1.32410</div><div class="ptk" style="top:699px"></div><div class="pl" style="letter-spacing:-0.724px;top:726px;font-size:13.5px">1.32280</div><div class="ptk" style="top:733px"></div><div class="pl" style="letter-spacing:-0.724px;top:760px;font-size:13.5px">1.32150</div><div class="ptk" style="top:767px"></div><div class="pl" style="letter-spacing:-0.724px;top:795px;font-size:13.5px">1.32020</div><div class="ptk" style="top:802px"></div><div class="pl" style="letter-spacing:-0.724px;top:829px;font-size:13.5px">1.31890</div><div class="ptk" style="top:836px"></div><div class="pl" style="letter-spacing:-0.724px;top:863px;font-size:13.5px">1.31760</div><div class="ptk" style="top:870px"></div><div class="pl" style="letter-spacing:-0.724px;top:897px;font-size:13.5px">1.31630</div><div class="ptk" style="top:904px"></div><div class="pl" style="letter-spacing:-0.724px;top:931px;font-size:13.5px">1.31500</div><div class="ptk" style="top:938px"></div>
<div class="tl" style="left:2px">29 Jul 2025</div><div class="ttk" style="left:2px"></div><div class="tl" style="left:130px">29 Jul 18:00</div><div class="ttk" style="left:130px"></div><div class="tl" style="left:259px">30 Jul 10:00</div><div class="ttk" style="left:259px"></div><div class="tl" style="left:387px">31 Jul 02:00</div><div class="ttk" style="left:387px"></div><div class="tl" style="left:515px">31 Jul 18:00</div><div class="ttk" style="left:515px"></div><div class="tl" style="left:643px">1 Aug 10:00</div><div class="ttk" style="left:643px"></div><div class="tl" style="left:771px">4 Aug 02:00</div><div class="ttk" style="left:771px"></div><div class="tl" style="left:899px">4 Aug 18:00</div><div class="ttk" style="left:899px"></div><div class="tl" style="left:1027px">5 Aug 10:00</div><div class="ttk" style="left:1027px"></div><div class="tl" style="left:1155px">6 Aug 02:00</div><div class="ttk" style="left:1155px"></div><div class="tl" style="left:1283px">6 Aug 18:00</div><div class="ttk" style="left:1283px"></div><div class="tl" style="left:1411px">7 Aug 10:00</div><div class="ttk" style="left:1411px"></div><div class="tl" style="left:1539px">8 Aug 02:00</div><div class="ttk" style="left:1539px"></div><div class="tl" style="left:1667px">8 Aug 18:00</div><div class="ttk" style="left:1667px"></div><div class="tl" style="left:1796px">11 Aug 10:00</div><div class="ttk" style="left:1796px"></div>
</div>
<!-- chart header -->
<svg class="abs" style="left:6px;top:78px" width="50" height="16" viewBox="0 0 50 16">
<rect x="2" y="2" width="9" height="12" fill="#f6c7c0" stroke="#d9352a" stroke-width="1"/>
<rect x="10" y="2" width="9" height="12" fill="#cfefff" stroke="#1a74c9" stroke-width="1"/>
<rect x="4" y="5" width="5" height="1.2" fill="#c0392b"/><rect x="4" y="8" width="5" height="1.2" fill="#c0392b"/><rect x="4" y="11" width="5" height="1.2" fill="#c0392b"/>
<rect x="12" y="5" width="5" height="1.2" fill="#1a5e9c"/><rect x="12" y="8" width="5" height="1.2" fill="#1a5e9c"/><rect x="12" y="11" width="5" height="1.2" fill="#1a5e9c"/>
<path d="M29 2h5v5h4v7h-9z" fill="#f8d4cc" stroke="#d9352a" stroke-width="1"/>
<path d="M40 3h5v11h-6v-5h2z" fill="#bfe9ff" stroke="#1a74c9" stroke-width="1"/>
<rect x="34" y="3" width="3" height="2" fill="#fff"/>
</svg>
<div class="abs" style="letter-spacing:-0.578px;left:61px;top:79px;font-size:13.2px;color:#f0f0f0;white-space:pre">GBPUSD@, M30:  Great British Pound vs US Dollar (1 lot = GBP100000)</div>

<!-- menubar -->
<div id="menubar">
<svg class="abs" style="left:6px;top:4px" width="22" height="22" viewBox="0 0 22 22">
<rect x="3" y="5" width="5" height="12" fill="#d8f5d8" stroke="#22b14c" stroke-width="1.6"/>
<rect x="13" y="4" width="5" height="14" fill="#d8f5d8" stroke="#22b14c" stroke-width="1.6"/>
<path d="M5.5 2v3M5.5 17v3M15.5 1v3M15.5 18v3" stroke="#22b14c" stroke-width="1.6"/>
</svg>
<div class="mi" style="letter-spacing:-0.938px;left:39px;font-size:16px">File</div>
<div class="mi" style="letter-spacing:-0.807px;left:88px;font-size:16px">View</div>
<div class="mi" style="letter-spacing:-0.809px;left:146px;font-size:16px">Insert</div>
<div class="mi" style="letter-spacing:-1.231px;left:208px;font-size:16px">Charts</div>
<div class="mi" style="letter-spacing:-0.598px;left:275px;font-size:16px">Tools</div>
<div class="mi" style="letter-spacing:-0.391px;left:336px;font-size:16px">Window</div>
<div class="mi" style="letter-spacing:-0.646px;left:418px;font-size:16px">Help</div>
</div>
<div id="toolbar"></div>
<svg class="abs" style="left:0;top:28px" width="1919" height="41" viewBox="0 28 1919 41">
<!-- grip -->
<g fill="#b0b0b0"><rect x="2" y="33" width="1" height="1.5"/><rect x="2" y="37" width="1" height="1.5"/><rect x="2" y="41" width="1" height="1.5"/><rect x="2" y="45" width="1" height="1.5"/><rect x="2" y="49" width="1" height="1.5"/><rect x="2" y="53" width="1" height="1.5"/><rect x="2" y="57" width="1" height="1.5"/><rect x="2" y="61" width="1" height="1.5"/><rect x="2" y="65" width="1" height="1.5"/></g>
<!-- separators -->
<g fill="#a8a8a8">
<rect x="155" y="32" width="1.5" height="34"/>
<rect x="356" y="32" width="1.5" height="34"/>
<rect x="606" y="32" width="1.5" height="34"/>
<rect x="729.5" y="32" width="1.5" height="34"/>
<rect x="852.5" y="32" width="1.5" height="34"/>
<rect x="936" y="32" width="1.5" height="34"/>
<rect x="1069.5" y="32" width="1.5" height="34"/>
</g>
<path d="M982.5 32v34M1362.5 32v34" stroke="#a0a0a0" stroke-width="1.2" stroke-dasharray="1.5 2.5"/>
<!-- highlight buttons -->
<g fill="#d6e4f2" stroke="#bccfe3" stroke-width="1">
<rect x="361.5" y="31.5" width="126" height="35"/>
<rect x="650.5" y="31.5" width="36" height="35"/>
<rect x="896.5" y="31.5" width="36" height="35"/>
<rect x="990.5" y="31.5" width="36" height="35"/>
<rect x="1489.5" y="31.5" width="35" height="35"/>
</g>
<!-- line chart icon -->
<path d="M18 38v22h21" stroke="#b5b5b5" stroke-width="1.3" fill="none"/>
<path d="M21 52l5-5l5 4l6-5" stroke="#1f6fb2" stroke-width="1.6" fill="none"/>
<path d="M47 48h9l-4.5 5z" fill="#111"/>
<!-- monitor -->
<rect x="68.5" y="36.5" width="23" height="20" rx="3" fill="#cfe8f7" stroke="#1f6fb2" stroke-width="1.5"/>
<path d="M72 46l5-4l4 3l7-5" stroke="#1f6fb2" stroke-width="1.5" fill="none"/>
<path d="M73 52v-3M76 52v-2M79 52v-3M82 52v-2M85 52v-4" stroke="#2ea84a" stroke-width="1.3"/>
<path d="M70 58h20l-2 4h-16z" fill="#cfe8f7" stroke="#1f6fb2" stroke-width="1.2"/>
<path d="M99 48h9l-4.5 5z" fill="#111"/>
<!-- $ -->
<rect x="122.5" y="38" width="21" height="21" rx="3" fill="#f5c518" stroke="#e7a80c" stroke-width="1"/>
<text x="133" y="55" text-anchor="middle" font-size="16" fill="#b07a00" font-family="Liberation Sans">$</text>
<!-- IDE -->
<text x="166.5" y="55.5" font-size="16.5" fill="#1f6fb2" font-family="Liberation Sans" stroke="#1f6fb2" stroke-width="0.4" textLength="23" lengthAdjust="spacingAndGlyphs">IDE</text>
<!-- bag -->
<path d="M208 45h18l1 14h-20z" fill="#f5c518" stroke="#e7a80c" stroke-width="1"/>
<path d="M212 45v-3a5 5 0 0 1 10 0v3" stroke="#e7a80c" stroke-width="1.5" fill="none"/>
<!-- signal -->
<circle cx="256" cy="49" r="2.5" fill="none" stroke="#c0c0c0" stroke-width="1.3"/>
<path d="M250 43a9 9 0 0 0 0 12M262 43a9 9 0 0 1 0 12M247 41a12 12 0 0 0 0 16M265 41a12 12 0 0 1 0 16" stroke="#c0c0c0" stroke-width="1.2" fill="none"/>
<!-- cloud -->
<path d="M287 54a5 5 0 0 1 1-9a7 7 0 0 1 13 1a4 4 0 0 1 1 8z" fill="#bfe3f7" stroke="#1f6fb2" stroke-width="1.5"/>
<path d="M295 54v4M285 58h20" stroke="#1f6fb2" stroke-width="1.5"/>
<!-- signals circle plus -->
<path d="M327 55a10 10 0 1 1 17-9" stroke="#1f6fb2" stroke-width="1.6" fill="none"/>
<path d="M331 53a6 6 0 1 1 9-6" stroke="#1f6fb2" stroke-width="1.6" fill="none"/>
<circle cx="339" cy="54" r="6" fill="#d8f5d8" stroke="#2ea84a" stroke-width="1.6"/>
<path d="M339 51v6M336 54h6" stroke="#2ea84a" stroke-width="1.5"/>
<!-- play -->
<path d="M372.5 42v14l11-7z" fill="none" stroke="#2ea84a" stroke-width="1.8"/>
<!-- new order -->
<path d="M500 38h12a3 3 0 0 1 3 3v14l-5 5h-10z" fill="#fff" stroke="#1f6fb2" stroke-width="1.5"/>
<path d="M507 43v8M503 47h8" stroke="#1f6fb2" stroke-width="1.5"/>
<path d="M511 60l4-4v4z" fill="#1f6fb2"/>
<!-- bars -->
<path d="M622 45v14M618 55h4M622 49h3M632 37v14M628 41h4M632 47h4" stroke="#2ea84a" stroke-width="1.8" fill="none"/>
<!-- candles -->
<rect x="661" y="43" width="4.5" height="13" fill="#d8f5d8" stroke="#2ea84a" stroke-width="1.7"/>
<rect x="672" y="42" width="4.5" height="15" fill="#d8f5d8" stroke="#2ea84a" stroke-width="1.7"/>
<path d="M663.2 38v5M663.2 56v4M674.2 37.5v4.5M674.2 57v3" stroke="#2ea84a" stroke-width="1.7"/>
<!-- line -->
<path d="M697 54l4-5l3 4l5-9l4 7l3-2l3 3" stroke="#2ea84a" stroke-width="1.7" fill="none"/>
<!-- zoom in -->
<circle cx="750" cy="47" r="7" fill="#cfe8f7" stroke="#1f6fb2" stroke-width="1.7"/>
<path d="M750 43.5v7M746.5 47h7M755 52l6 6" stroke="#1f6fb2" stroke-width="1.7"/>
<!-- zoom out -->
<circle cx="789" cy="47" r="7" fill="#cfe8f7" stroke="#1f6fb2" stroke-width="1.7"/>
<path d="M785.5 47h7M794 52l6 6" stroke="#1f6fb2" stroke-width="1.7"/>
<!-- grid -->
<rect x="820" y="38" width="21" height="21" rx="2.5" fill="#cfe8f7" stroke="#1f6fb2" stroke-width="1.7"/>
<path d="M830.5 38v21M820 48.5h21" stroke="#1f6fb2" stroke-width="1.7"/>
<!-- scroll -->
<rect x="864" y="44" width="3" height="10" fill="#d8f5d8" stroke="#2ea84a" stroke-width="1.4"/>
<rect x="870" y="43" width="3" height="11" fill="#d8f5d8" stroke="#2ea84a" stroke-width="1.4"/>
<path d="M865.5 41v3M865.5 54v3M871.5 40v3M871.5 54v3" stroke="#2ea84a" stroke-width="1.3"/>
<path d="M875 48h6M878.5 45l3 3l-3 3M886 38v19" stroke="#1f6fb2" stroke-width="1.5" fill="none"/>
<path d="M864 61h23" stroke="#aaa" stroke-width="1"/>
<!-- autoscroll -->
<rect x="903" y="44" width="3" height="10" fill="#d8f5d8" stroke="#2ea84a" stroke-width="1.4"/>
<rect x="909" y="43" width="3" height="11" fill="#d8f5d8" stroke="#2ea84a" stroke-width="1.4"/>
<path d="M904.5 41v3M904.5 54v3M910.5 40v3M910.5 54v3" stroke="#2ea84a" stroke-width="1.3"/>
<path d="M915 38v19M919 48h8M922 45l-3 3l3 3" stroke="#1f6fb2" stroke-width="1.5" fill="none"/>
<path d="M903 61h24" stroke="#aaa" stroke-width="1"/>
<!-- screenshot -->
<rect x="947.5" y="37.5" width="24" height="21" rx="3" fill="none" stroke="#1f6fb2" stroke-width="1.4" stroke-dasharray="3 2"/>
<path d="M954 48h3l2-2h5l2 2h3v11h-15z" fill="#cfe8f7" stroke="#1f6fb2" stroke-width="1.5"/>
<circle cx="961.5" cy="53" r="2" fill="none" stroke="#1f6fb2" stroke-width="1.3"/>
<!-- cursor -->
<path d="M1001 39l14 5l-6 2l5 6l-2 2l-5-6l-3 5z" fill="#cfe8f7" stroke="#1f6fb2" stroke-width="1.6" stroke-linejoin="round"/>
<!-- crosshair -->
<path d="M1048 37v22M1037 48h22" stroke="#1f6fb2" stroke-width="1.6"/>
<circle cx="1048" cy="48" r="2.8" fill="#f0f0f0" stroke="#1f6fb2" stroke-width="1.5"/>
<!-- vline -->
<path d="M1092.5 37v22" stroke="#1f6fb2" stroke-width="1.6"/>
<circle cx="1092.5" cy="48" r="2.8" fill="#f0f0f0" stroke="#1f6fb2" stroke-width="1.5"/>
<!-- hline -->
<path d="M1120 48h23" stroke="#1f6fb2" stroke-width="1.6"/>
<circle cx="1131.5" cy="48" r="2.8" fill="#f0f0f0" stroke="#1f6fb2" stroke-width="1.5"/>
<!-- trendline -->
<path d="M1161 57l18-18" stroke="#1f6fb2" stroke-width="1.6"/>
<circle cx="1161" cy="58" r="2.8" fill="#f0f0f0" stroke="#1f6fb2" stroke-width="1.5"/>
<circle cx="1179.5" cy="39.5" r="2.8" fill="#f0f0f0" stroke="#1f6fb2" stroke-width="1.5"/>
<!-- channel -->
<path d="M1200 50l10-10M1208 56l13-13" stroke="#1f6fb2" stroke-width="1.6"/>
<circle cx="1200" cy="50" r="2.8" fill="#f0f0f0" stroke="#1f6fb2" stroke-width="1.5"/>
<circle cx="1210" cy="40" r="2.8" fill="#f0f0f0" stroke="#1f6fb2" stroke-width="1.5"/>
<circle cx="1208" cy="58" r="2.8" fill="#f0f0f0" stroke="#1f6fb2" stroke-width="1.5"/>
<!-- fibo -->
<path d="M1237 40h23M1237 45.5h17M1237 51h23M1241 58h19" stroke="#1f6fb2" stroke-width="1.6"/>
<circle cx="1257" cy="45.5" r="2.5" fill="#f0f0f0" stroke="#1f6fb2" stroke-width="1.5"/>
<circle cx="1240" cy="58" r="2.5" fill="#f0f0f0" stroke="#1f6fb2" stroke-width="1.5"/>
<!-- T -->
<path d="M1280 40h16M1288 40v17" stroke="#1f6fb2" stroke-width="1.7"/>
<!-- shapes -->
<path d="M1320 38l4 7h-8z" fill="none" stroke="#1f6fb2" stroke-width="1.5"/>
<circle cx="1331" cy="42" r="3.8" fill="none" stroke="#1f6fb2" stroke-width="1.5"/>
<path d="M1316 55l4-4l4 4l-2 4h-4z" fill="none" stroke="#1f6fb2" stroke-width="1.5"/>
<rect x="1327.5" y="51.5" width="7" height="7" rx="1.5" fill="none" stroke="#1f6fb2" stroke-width="1.5"/>
<path d="M1343 48h9l-4.5 5z" fill="#111"/>
</svg>
<div class="tb" style="letter-spacing:-0.693px;left:396px;top:41px;font-size:16.5px">Algo Trading</div>
<div class="tb" style="letter-spacing:-1.096px;left:524px;top:41px;font-size:16.5px">New Order</div>
<div class="tf" style="left:1379px;font-size:16.5px;transform:scaleX(0.855);transform-origin:0 0">M1</div>
<div class="tf" style="left:1418px;font-size:16.5px;transform:scaleX(0.855);transform-origin:0 0">M5</div>
<div class="tf" style="left:1453px;font-size:16.5px;transform:scaleX(0.855);transform-origin:0 0">M15</div>
<div class="tf" style="left:1492px;font-size:16.5px;transform:scaleX(0.855);transform-origin:0 0">M30</div>
<div class="tf" style="left:1535px;font-size:16.5px;transform:scaleX(0.855);transform-origin:0 0">H1</div>

<div class="abs" style="left:1529px;top:-20px;width:281px;height:104px;background:rgba(244,244,244,0.95);border-radius:0 0 24px 24px"></div>
<svg class="abs" style="left:1580px;top:10px" width="146" height="30" viewBox="0 0 146 30">
<g stroke="#707070" stroke-width="1.9" fill="none" stroke-linecap="butt">
<path d="M133 7.6H140.6V21.9H128.5V13.4M128.5 21.9L124 26.5"/>
<path d="M122.4 13.4V21.9H113.4M114.9 26.5H119.4"/>
<path d="M113.4 13.4V21.9H106.6"/>
<path d="M105.8 13.4V21.9H98.3M97.5 26.5H102"/>
<path d="M98.3 13.4V21.9M91.5 7.2h1.2"/>
<path d="M98.3 21.9H64.2V13.4M69.5 13.8L82.4 6.4M72.2 14.8L84.5 7.8"/>
<path d="M58.2 11.3V21.9H44.6M52.9 11.3H58.2V14.6H52.9ZM54.6 8.7h1.2"/>
<path d="M45.4 9.1V21.9"/>
<path d="M37.8 13.4V21.9H21.2M34.8 26.5H39.3"/>
<path d="M29.5 13.4V21.9M28.9 7.6h1.2"/>
<path d="M21.2 13.4V21.9H11.3"/>
<path d="M9.8 13.4V21.9L3.4 22.3"/>
</g>
</svg>
<div class="abs" style="left:1582px;top:43px;font-size:17.7px;color:#6c6c6c;transform:scaleX(1.27);transform-origin:0 0">TradingFinder</div>
<svg class="abs" style="left:1738px;top:15px" width="34" height="48" viewBox="0 0 34 48">
<g fill="none" stroke="#2fe6f4" stroke-width="2.4" stroke-linejoin="miter">
<path d="M2.5 2.5H9.2V20H2.5Z"/>
<path d="M9.2 13.2H30V21.2H9.6L2.5 29V37L9 44.5H30V35.2H8.2V27"/>
</g>
</svg>
<!-- window controls -->
<svg class="abs" style="left:1840px;top:4px" width="79" height="22" viewBox="0 0 79 22">
<path d="M14 10.5h10" stroke="#999" stroke-width="1.2"/>
<rect x="38.5" y="6.5" width="7" height="7" fill="none" stroke="#999" stroke-width="1.2"/>
<path d="M40.5 6.5v-2h7v7h-2" fill="none" stroke="#999" stroke-width="1.2"/>
<path d="M62 5.5l9 9M71 5.5l-9 9" stroke="#999" stroke-width="1.3"/>
</svg>
<div class="abs" style="left:1829px;top:27px;width:90px;height:1px;background:#cfcfcf"></div>
<svg class="abs" style="left:1826px;top:36px" width="24" height="26" viewBox="0 0 24 26">
<path d="M11 2l-5 5h3v4h4v-4h3z" fill="#fff" stroke="#2ea84a" stroke-width="1.5" stroke-linejoin="round"/>
<text x="2" y="22" font-size="9" font-weight="bold" fill="#2ea84a" font-family="Liberation Sans">LVL</text>
</svg>
<div class="abs" style="left:1856px;top:40px;width:57px;height:20px;background:#fff;border:1px solid #999"></div>
<div class="abs" style="left:1857px;top:41px;width:11px;height:18px;background:#3cc43c"></div>

<div id="dlg">
<div class="dt" style="letter-spacing:-0.148px;left:8px;top:10px;font-size:15px">Fair Value Gap Absorption Indicator MT5 - By TFlab 1.2</div>
<svg class="abs" style="left:640px;top:6px" width="160" height="24" viewBox="0 0 160 24">
<path d="M9 11.5h12" stroke="#1a1a1a" stroke-width="1.2"/>
<rect x="67.5" y="5.5" width="11" height="11" rx="1.5" fill="none" stroke="#b8b8b8" stroke-width="1"/>
<path d="M126 6l12 12M138 6l-12 12" stroke="#1a1a1a" stroke-width="1.3"/>
</svg>
<div class="abs" style="left:7px;top:47px;width:790px;height:311px;background:#fff"></div>
<div class="dt" style="letter-spacing:-0.759px;left:17px;top:51px">Common</div>
<div class="dt" style="letter-spacing:-0.159px;left:84px;top:51px">Inputs</div>
<div class="abs" style="left:84px;top:70px;width:36px;height:3px;background:#0f6cbd;border-radius:1px"></div>
<div class="dt" style="letter-spacing:-0.406px;left:136px;top:51px">Colors</div>
<div class="dt" style="letter-spacing:-0.382px;left:188px;top:51px">Visualization</div>
<!-- table -->
<div class="abs" style="left:20px;top:87px;width:632px;height:252px;border:1px solid #8e8e8e;background:#fff"></div>
<div class="abs" style="left:335px;top:88px;width:1px;height:159px;background:#d6d6d6"></div>
<div class="dt" style="letter-spacing:-0.223px;left:30px;top:94px">Variable</div>
<div class="dt" style="letter-spacing:-0.387px;left:344px;top:94px">Value</div>
<div class="abs" style="left:22px;top:140px;width:629px;height:27px;background:#ebebeb"></div>
<div class="abs" style="left:22px;top:193px;width:629px;height:27px;background:#ebebeb"></div>
<div class="abs" style="left:22px;top:140px;width:629px;height:1px;background:#cfcfcf"></div>
<div class="abs" style="left:22px;top:167px;width:629px;height:1px;background:#cfcfcf"></div>
<div class="abs" style="left:22px;top:193px;width:629px;height:1px;background:#cfcfcf"></div>
<div class="abs" style="left:22px;top:220px;width:629px;height:1px;background:#cfcfcf"></div>
<div class="abs" style="left:22px;top:246px;width:629px;height:1px;background:#cfcfcf"></div>
<div class="dt" style="letter-spacing:-0.303px;left:48px;top:120px">Fair Value Gap Width Filter</div>
<div class="dt" style="letter-spacing:-0.423px;left:48px;top:147px">Bearish Fair Value Gap Color</div>
<div class="dt" style="letter-spacing:-0.422px;left:48px;top:173px">Bullish Fair Value Gap Color</div>
<div class="dt" style="letter-spacing:-0.378px;left:48px;top:200px">Display Percentage of Mitigation</div>
<div class="dt" style="letter-spacing:-0.421px;left:48px;top:226px">Display Historical Fair Value Gaps</div>
<div class="dt" style="letter-spacing:-0.391px;left:340px;top:120px">0.5</div>
<div class="abs" style="left:341px;top:146px;width:15px;height:15px;background:#2c040c;border:1px solid #555"></div>
<div class="dt" style="letter-spacing:-0.346px;left:360px;top:147px">44,4,12</div>
<div class="abs" style="left:341px;top:173px;width:15px;height:15px;background:#0c2316;border:1px solid #555"></div>
<div class="dt" style="letter-spacing:-0.371px;left:360px;top:173px">12,35,22</div>
<div class="dt" style="letter-spacing:-0.094px;left:340px;top:200px">true</div>
<div class="dt" style="letter-spacing:-0.094px;left:340px;top:226px">true</div>
<svg class="abs" style="left:24px;top:116px" width="22" height="132" viewBox="0 0 22 132">
<g fill="none" stroke="#1f64a8" stroke-width="1.7" stroke-linecap="round" stroke-linejoin="round">
<path d="M3.2 4L5.6 2.2V10"/>
<path d="M12.8 2.5L5.4 16"/>
<path d="M9.6 11.6Q12 9.2 14.2 10.8Q15 12.6 9.8 16H15.4"/>
</g>
<g fill="none" stroke-width="1.5">
<circle cx="8.7" cy="33.6" r="2.4" stroke="#e0503f"/>
<circle cx="5.9" cy="38.7" r="2.4" stroke="#1f6fb2"/>
<circle cx="11.5" cy="38.7" r="2.4" stroke="#2ea84a"/>
<circle cx="8.7" cy="60.2" r="2.4" stroke="#e0503f"/>
<circle cx="5.9" cy="65.3" r="2.4" stroke="#1f6fb2"/>
<circle cx="11.5" cy="65.3" r="2.4" stroke="#2ea84a"/>
</g>
<g fill="none" stroke="#22a245" stroke-width="1.7" stroke-linecap="round" stroke-linejoin="round">
<path d="M5.2 98V83M2.4 87L4.8 83L7.4 87M5.2 95Q6 88 15.5 87.8M12.6 84.8L15.5 87.8L12.8 91"/>
<path d="M5.2 124.6V109.6M2.4 113.6L4.8 109.6L7.4 113.6M5.2 121.6Q6 114.6 15.5 114.4M12.6 111.4L15.5 114.4L12.8 117.6"/>
</g>
</svg>
<div class="btn" style="letter-spacing:-1.154px;left:661px;top:269px;width:121px;height:27px;line-height:25px">Load</div>
<div class="btn" style="letter-spacing:-1.127px;left:661px;top:309px;width:121px;height:28px;line-height:26px">Save</div>
<div class="btn" style="letter-spacing:-3.900px;left:517px;top:366px;width:87px;height:28px;line-height:25px;border:2px solid #2a78c4">OK</div>
<div class="btn" style="letter-spacing:-0.909px;left:611px;top:366px;width:86px;height:28px;line-height:26px">Cancel</div>
<div class="btn" style="letter-spacing:-0.770px;left:704px;top:366px;width:86px;height:28px;line-height:26px">Reset</div>
<svg class="abs" style="left:786px;top:388px" width="12" height="12"><g fill="#a0a0a0"><rect x="8" y="2" width="2" height="2"/><rect x="5" y="5" width="2" height="2"/><rect x="8" y="5" width="2" height="2"/><rect x="2" y="8" width="2" height="2"/><rect x="5" y="8" width="2" height="2"/><rect x="8" y="8" width="2" height="2"/></g></svg>
</div>

</body></html>
